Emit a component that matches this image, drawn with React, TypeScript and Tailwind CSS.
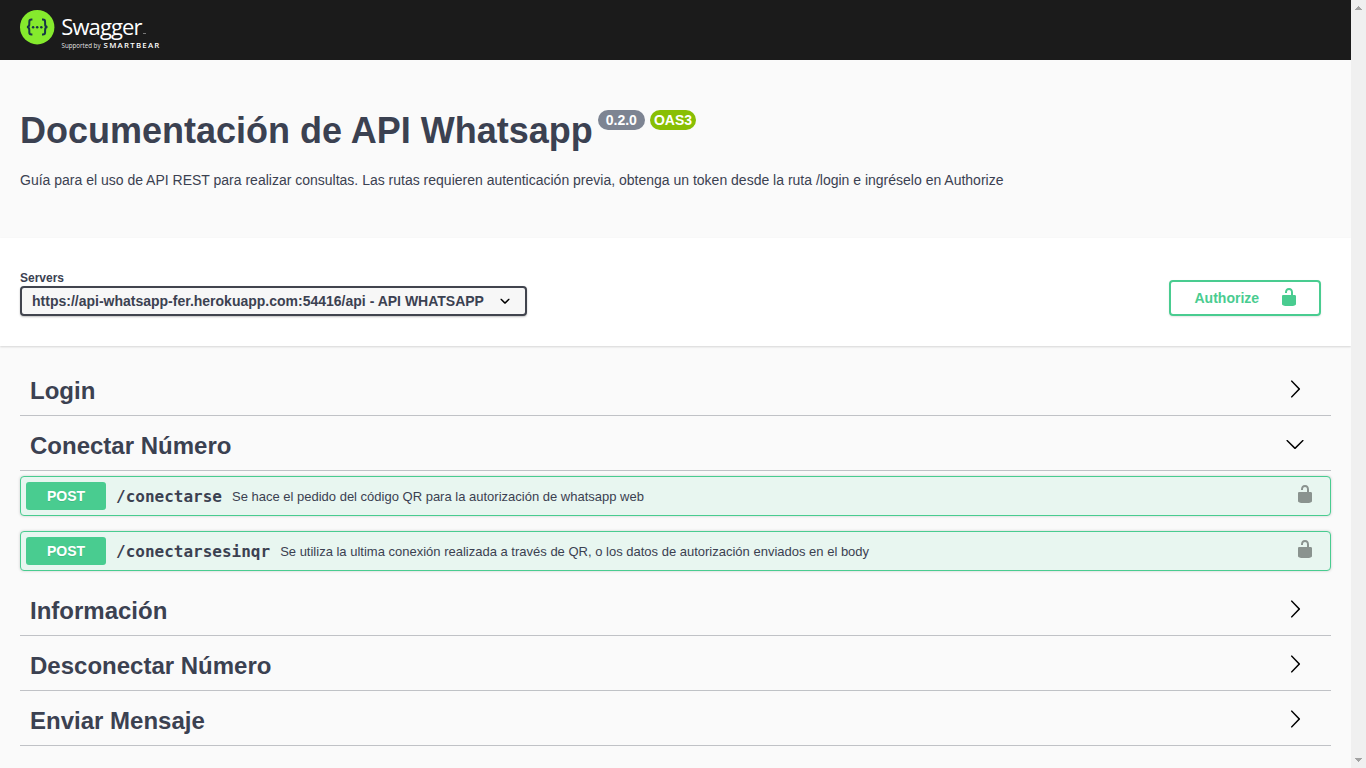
import React from "react";

const ARROW_RIGHT =
  "M13.25 10L6.109 2.58c-.268-.27-.268-.707 0-.979.268-.27.701-.27.969 0l7.83 7.908c.268.271.268.709 0 .979l-7.83 7.908c-.268.271-.701.27-.969 0-.268-.269-.268-.707 0-.979L13.25 10z";
const ARROW_DOWN =
  "M17.418 6.109c.272-.268.709-.268.979 0s.271.701 0 .969l-7.908 7.83c-.27.268-.707.268-.979 0l-7.908-7.83c-.27-.268-.27-.701 0-.969.271-.268.709-.268.979 0L10 13.25l7.418-7.141z";
const SELECT_ARROW =
  "M13.418 7.859c.271-.268.709-.268.978 0 .27.268.272.701 0 .969l-3.908 3.83c-.27.268-.707.268-.979 0l-3.908-3.83c-.27-.267-.27-.701 0-.969.271-.268.709-.268.978 0L10 11l3.418-3.141z";
const UNLOCKED =
  "M15.8 8H14V5.6C14 2.703 12.665 1 10 1 7.334 1 6 2.703 6 5.6V6h2v-.801C8 3.754 8.797 3 10 3c1.203 0 2 .754 2 2.199V8H4c-.553 0-1 .646-1 1.199V17c0 .549.428 1.139.951 1.307l1.197.387C5.672 18.861 6.55 19 7.1 19h5.8c.549 0 1.428-.139 1.951-.307l1.196-.387c.524-.167.953-.757.953-1.306V9.199C17 8.646 16.352 8 15.8 8z";

function Icon({ d, className = "" }: { d: string; className?: string }) {
  return (
    <svg viewBox="0 0 20 20" width="20" height="20" fill="currentColor" className={`shrink-0 ${className}`}>
      <path d={d} />
    </svg>
  );
}

function Logo() {
  return (
    <svg width="160" height="46" viewBox="0 0 160 46" className="block">
      <circle cx="17.2" cy="17.2" r="17.2" fill="#85ea2d" />
      <g fill="none" stroke="#173647" strokeWidth="2">
        <path d="M12.400 9.600h-.9c-1.500 0-2.200.8-2.200 2.300v2.400c0 1.700-.6 2.800-2.400 2.800 1.800 0 2.400 1.100 2.400 2.800v2.400c0 1.500.7 2.300 2.200 2.300h.9" />
        <path d="M22 9.600h.9c1.500 0 2.200.8 2.200 2.300v2.400c0 1.700.6 2.800 2.400 2.800-1.800 0-2.400 1.100-2.400 2.800v2.400c0 1.500-.7 2.300-2.200 2.300h-.9" />
      </g>
      <g fill="#173647">
        <circle cx="13.100" cy="17.200" r="1.250" />
        <circle cx="17.200" cy="17.200" r="1.250" />
        <circle cx="21.300" cy="17.200" r="1.250" />
      </g>
      <text x="41.200" y="24.600" textLength="80.500" lengthAdjust="spacingAndGlyphs" letterSpacing="-.9" fill="#fff" fontFamily="'Open Sans', sans-serif" fontWeight="400" fontSize="22.500">
        Swagger
      </text>
      <path d="M123 23.500h3" stroke="#fff" strokeOpacity=".5" strokeWidth=".8" />
      <text x="41.500" y="38.200" textLength="39" lengthAdjust="spacingAndGlyphs" fill="#fff" fillOpacity=".9" fontFamily="'Open Sans', sans-serif" fontSize="6.300">
        Supported by
      </text>
      <text x="83.600" y="38.100" textLength="57" lengthAdjust="spacingAndGlyphs" letterSpacing="1.200" fill="#fff" fontFamily="'Open Sans', sans-serif" fontWeight="600" fontSize="7.600">
        SMARTBEAR
      </text>
    </svg>
  );
}

function Tag({ name, open = false }: { name: string; open?: boolean }) {
  return (
    <h3 className="mb-[5px] flex h-[50px] items-center border-b border-[#3b4151]/30 pr-[26px] pl-[10px] text-2xl font-bold">
      <span className="flex-1">{name}</span>
      <Icon d={open ? ARROW_DOWN : ARROW_RIGHT} className="mb-[3px] text-black" />
    </h3>
  );
}

function Operation({ path, summary }: { path: string; summary: string }) {
  return (
    <div className="mb-[15px] flex h-10 items-center rounded border border-[#49cc90] bg-[#e8f6f0] pr-[15px] pl-[5px] shadow-[0_0_3px_rgba(0,0,0,.19)]">
      <span className="w-20 rounded-[3px] bg-[#49cc90] text-center text-sm leading-7 font-bold text-white [text-shadow:0_1px_0_rgba(0,0,0,.1)]">
        POST
      </span>
      <span className="px-[10px] pt-[2px] font-['DejaVu_Sans_Mono',monospace] text-base font-semibold">{path}</span>
      <span className="flex-1 pt-[2px] text-[13px]">{summary}</span>
      <Icon d={UNLOCKED} className="mb-1 text-black opacity-40" />
    </div>
  );
}

export default function App() {
  return (
    <div className="flex h-[768px] w-full overflow-hidden bg-[#fafafa] font-['Liberation_Sans',Arial,sans-serif] text-[#3b4151]">
      <main className="min-w-0 flex-1">
        <header className="h-[60px] bg-[#1b1b1b] px-5 pt-[10px]">
          <Logo />
        </header>
        <section className="h-[178px] px-5 pt-[50px]">
          <div className="flex items-start">
            <h1 className="text-[36px] leading-[41px] font-bold">Documentación de API Whatsapp</h1>
            <span className="ml-[5px] h-5 rounded-full bg-[#7d8492] px-2 text-sm leading-5 font-bold text-white">0.2.0</span>
            <span className="ml-[5px] h-5 rounded-full bg-[#89bf04] px-1 text-sm leading-5 font-bold text-white">OAS3</span>
          </div>
          <p className="mt-[19px] text-sm">
            Guía para el uso de API REST para realizar consultas. Las rutas requieren autenticación previa, obtenga un token desde la ruta /login e ingréselo en Authorize
          </p>
        </section>
        <section className="flex h-[108px] justify-between bg-white pr-[30px] pl-5 shadow-[0_1px_2px_rgba(0,0,0,.15)]">
          <div className="pt-8">
            <div className="text-xs leading-4 font-bold">Servers</div>
            <button className="flex h-[30px] w-[507px] items-center justify-between rounded border-2 border-[#41444e] bg-[#f7f7f7] pr-[10px] pl-[10px] text-sm font-bold shadow-[0_1px_2px_rgba(0,0,0,.25)]">
              <span>https://api-whatsapp-fer.herokuapp.com:54416/api - API WHATSAPP</span>
              <Icon d={SELECT_ARROW} className="text-black" />
            </button>
          </div>
          <button className="mt-[42px] flex h-9 w-[152px] items-center justify-between rounded border-2 border-[#49cc90] pr-5 pl-[23.5px] text-sm font-bold text-[#49cc90] shadow-[0_1px_2px_rgba(0,0,0,.1)]">
            <span>Authorize</span>
            <Icon d={UNLOCKED} className="mb-[2px]" />
          </button>
        </section>
        <section className="px-5 pt-5">
          <Tag name="Login" />
          <Tag name="Conectar Número" open />
          <Operation path="/conectarse" summary="Se hace el pedido del código QR para la autorización de whatsapp web" />
          <Operation path="/conectarsesinqr" summary="Se utiliza la ultima conexión realizada a través de QR, o los datos de autorización enviados en el body" />
          <Tag name="Información" />
          <Tag name="Desconectar Número" />
          <Tag name="Enviar Mensaje" />
        </section>
      </main>
      <aside className="flex w-[15px] shrink-0 flex-col items-center justify-between bg-[#f0f0f0] pt-[6px] pb-[6px]">
        <svg width="7" height="4" viewBox="0 0 7 4" fill="#a3a3a3" shapeRendering="crispEdges">
          <path d="M3 0h1v1h1v1h1v1h1v1H0V3h1V2h1V1h1z" />
        </svg>
        <svg width="7" height="4" viewBox="0 0 7 4" fill="#a3a3a3" shapeRendering="crispEdges">
          <path d="M0 0h7v1H6v1H5v1H4v1H3V3H2V2H1V1H0z" />
        </svg>
      </aside>
    </div>
  );
}
